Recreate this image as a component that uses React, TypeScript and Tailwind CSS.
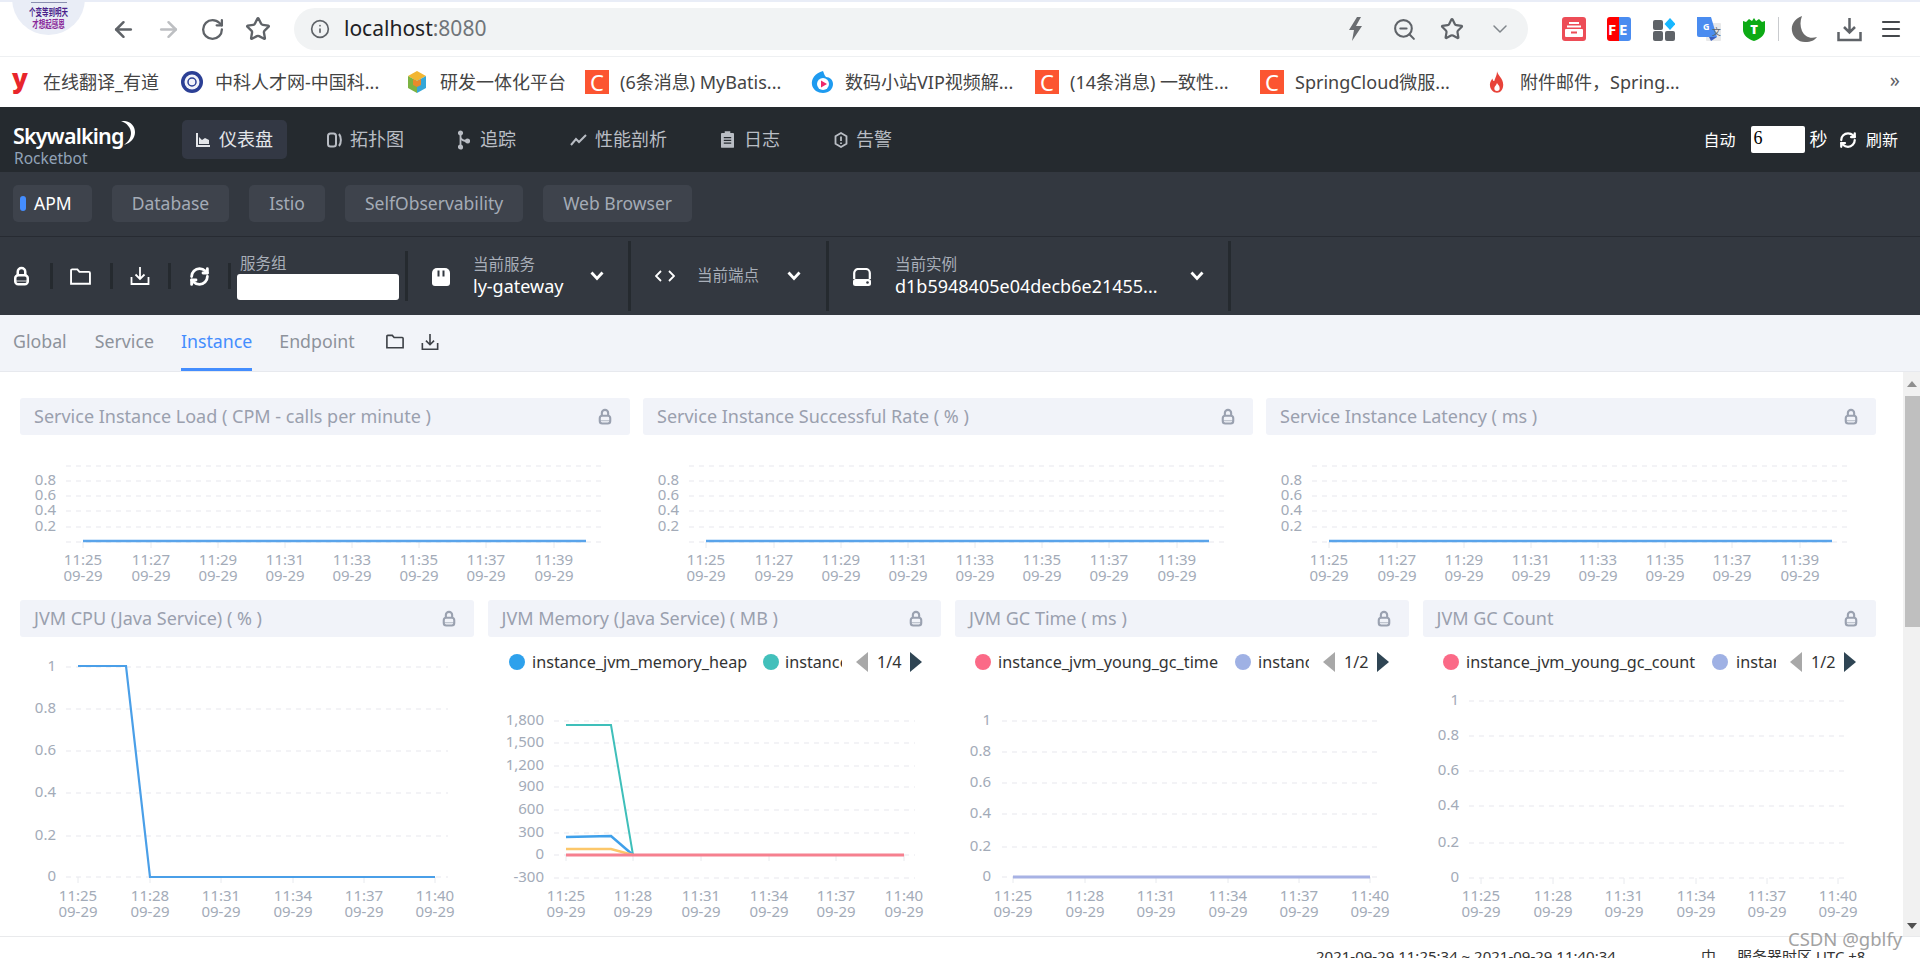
import React from "react";
import { ArrowLeft, ArrowRight, RotateCw, Star, Info, ZoomOut, ChevronDown, RefreshCw, Menu } from "lucide-react";

const FONT = '"Noto Sans","Noto Sans CJK SC",sans-serif';

const LockIcon = ({ className = "" }: { className?: string }) => (
  <svg viewBox="0 0 20 24" className={className} fill="none" stroke="currentColor" strokeWidth="3">
    <path d="M5.5 11V7a4.5 4.5 0 0 1 9 0v4" />
    <rect x="2.5" y="11" width="15" height="11" rx="3.5" />
    <path d="M3 18h14" strokeWidth="1" />
  </svg>
);
const FolderIcon = ({ className = "" }: { className?: string }) => (
  <svg viewBox="0 0 20 16" className={className} fill="none" stroke="currentColor" strokeWidth="1.8">
    <path d="M1 14.9V2.2c0-.6.4-1 1-1h5l2 2.4h9c.6 0 1 .4 1 1v10.3z" />
  </svg>
);
const SaveIcon = ({ className = "" }: { className?: string }) => (
  <svg viewBox="0 0 20 20" className={className} fill="none" stroke="currentColor" strokeWidth="1.8">
    <path d="M10 1v12M5.5 8.5 10 13l4.5-4.5" />
    <path d="M1.5 11v7h17v-7" />
  </svg>
);
const ServiceIcon = () => (
  <svg viewBox="0 0 18 18" className="w-[18px] h-[18px] mt-[2px] shrink-0">
    <path d="M0 5a5 5 0 0 1 5-5h8a5 5 0 0 1 5 5v10a3 3 0 0 1-3 3H3a3 3 0 0 1-3-3z" fill="white" />
    <rect x="5.5" y="2.5" width="2" height="6" fill="#333840" />
    <rect x="10.5" y="2.5" width="2" height="6" fill="#333840" />
  </svg>
);
const InstanceIcon = () => (
  <svg viewBox="0 0 18 18" className="w-[18px] h-[18px] mt-[2px] shrink-0" fill="none">
    <path d="M1.2 11V5A4 4 0 0 1 5.2 1h7.6a4 4 0 0 1 4 4v6" stroke="white" strokeWidth="2.2" />
    <rect x="0" y="11" width="18" height="7" rx="2.5" fill="white" />
    <circle cx="14.5" cy="14.5" r="1.3" fill="#333840" />
  </svg>
);
const Chev = () => (
  <svg viewBox="0 0 14 10" className="w-[14px] h-[10px] shrink-0" fill="none" stroke="white" strokeWidth="2.8">
    <path d="M1.5 1.5 7 7.5l5.5-6" />
  </svg>
);

function NavItem({ icon, label, active, gap = 9 }: { icon: React.ReactNode; label: string; active?: boolean; gap?: number }) {
  return (
    <div className={`flex items-center h-[39px] px-[14px] rounded-[5px] text-[18px] ${active ? "bg-[#333844] text-[#e4e6ea]" : "text-[#b9bdc4]"}`}>
      <span className="flex items-center" style={{ marginRight: gap }}>{icon}</span>
      <span>{label}</span>
    </div>
  );
}

const Tab = ({ label, active }: { label: string; active?: boolean }) => (
  <div className={`h-[37px] rounded-[5px] bg-[#3e434c] flex items-center text-[17.5px] ${active ? "pl-[7px] pr-[20px] text-white" : "px-[20px] text-[#a4abb6]"}`}>
    {active && <span className="w-[6px] h-[15px] rounded-full bg-[#448dfe] mr-[8px]" />}
    {label}
  </div>
);

const PanelTitle = ({ title }: { title: string }) => (
  <div className="h-[37px] rounded-[3px] bg-[#f1f3f9] flex items-center justify-between pl-[14px] pr-[18px] text-[18px] text-[#9aa0ae]">
    <span className="whitespace-nowrap">{title}</span>
    <LockIcon className="w-[14px] h-[17px] text-[#9aa1b0]" />
  </div>
);

type Series = { color: string; width?: number; points: [number, number][] };
type Legend = { dot1: number; t1: number; name: string; dot2: number; color1: string; color2: string; t2: number; clip: number; left: number; page: string };

function Chart({ x0, y0, w, h, yTicks, yLabelX, gridX, xTicks, xLabels, baseY, labelY, series, legend, clipId }: {
  x0: number; y0: number; w: number; h: number; yTicks: [string, number][]; yLabelX: number; gridX: [number, number];
  xTicks: number[]; xLabels: string[]; baseY: number; labelY: number; series: Series[]; legend?: Legend; clipId?: string;
}) {
  return (
    <svg viewBox={`${x0} ${y0} ${w} ${h}`} width={w} height={h} className="block" style={{ fontFamily: FONT }}>
      {yTicks.map(([t, y]) => (
        <g key={y}>
          <line x1={gridX[0]} x2={gridX[1]} y1={y} y2={y} stroke="#eff0f3" strokeWidth="1.5" strokeDasharray="5 5" />
          {t && <text x={yLabelX} y={y + 3.5} textAnchor="end" fontSize="15" fill="#a3abb8">{t}</text>}
        </g>
      ))}
      {xTicks.map((x, i) => (
        <g key={x}>
          <line x1={x} x2={x} y1={baseY} y2={baseY + 6} stroke="#e8eaee" />
          <text x={x} y={labelY} textAnchor="middle" fontSize="15" fill="#a3abb8">{xLabels[i]}</text>
          <text x={x} y={labelY + 16} textAnchor="middle" fontSize="15" fill="#a3abb8">09-29</text>
        </g>
      ))}
      {series.map((s, i) => (
        <polyline key={i} points={s.points.map((p) => p.join(",")).join(" ")} fill="none" stroke={s.color} strokeWidth={s.width ?? 2} />
      ))}
      {legend && (
        <g fontSize="16.2" fill="#333">
          <clipPath id={clipId}><rect x={legend.t2} y={645} width={legend.clip} height={36} /></clipPath>
          <circle cx={legend.dot1} cy={663} r={8} fill={legend.color1} />
          <text x={legend.t1} y={668.5}>{legend.name}</text>
          <circle cx={legend.dot2} cy={663} r={8} fill={legend.color2} />
          <text x={legend.t2} y={668.5} clipPath={`url(#${clipId})`}>instance_jvm</text>
          <path d={`M${legend.left + 12} 653v20l-12-10z`} fill="#a8a8a8" />
          <text x={legend.left + 21} y={668.5}>{legend.page}</text>
          <path d={`M${legend.left + 54} 653v20l12-10z`} fill="#2f4554" />
        </g>
      )}
    </svg>
  );
}

const TOP_LABELS = ["11:25", "11:27", "11:29", "11:31", "11:33", "11:35", "11:37", "11:39"];
const BOT_LABELS = ["11:25", "11:28", "11:31", "11:34", "11:37", "11:40"];

const TopChart = () => (
  <Chart
    x0={20} y0={435} w={610} h={155}
    yTicks={[["", 466], ["0.8", 481], ["0.6", 496], ["0.4", 511], ["0.2", 527], ["", 542]]}
    yLabelX={56} gridX={[66, 602]}
    xTicks={[83, 151, 218, 285, 352, 419, 486, 554]} xLabels={TOP_LABELS}
    baseY={542} labelY={565}
    series={[{ color: "#5aa4ea", width: 2.5, points: [[83, 541], [586, 541]] }]}
  />
);

const Favicon = ({ children }: { children: React.ReactNode }) => <span className="w-[24px] h-[24px] flex items-center justify-center shrink-0">{children}</span>;
const CsdnC = () => (
  <span className="w-[24px] h-[24px] bg-[#fc5531] text-white text-[22px] leading-[24px] text-center block">C</span>
);

const bookmarks: { icon: React.ReactNode; text: string; w: number }[] = [
  { icon: <span className="text-[#e8252b] text-[26px] font-black leading-none -mt-[8px]">y</span>, text: "在线翻译_有道", w: 172 },
  { icon: (
    <svg viewBox="0 0 24 24" className="w-[24px] h-[24px]"><circle cx="12" cy="12" r="11" fill="#2b3f95" /><circle cx="12" cy="12" r="7.5" fill="#f3f4fa" /><circle cx="12" cy="12" r="4" fill="none" stroke="#2b3f95" strokeWidth="1.5" /></svg>
  ), text: "中科人才网-中国科...", w: 225 },
  { icon: (
    <svg viewBox="0 0 24 24" className="w-[24px] h-[24px]"><path d="M12 1 21 6 12 11 3 6z" fill="#f2b632" /><path d="M3 6l9 5v12L3 18z" fill="#7cb342" /><path d="M21 6l-9 5v12l9-5z" fill="#35a7d8" /><path d="M8 9l4 2 4-2v6l-4 2-4-2z" fill="#e98a2b" /></svg>
  ), text: "研发一体化平台", w: 180 },
  { icon: <CsdnC />, text: "(6条消息) MyBatis...", w: 225 },
  { icon: (
    <svg viewBox="0 0 24 24" className="w-[24px] h-[24px]"><path d="M13 1C5 3 1 9 2 15c1 5 6 8 11 8 6 0 10-4 10-9 0-4-3-7-7-7-2-2-2-4-3-6z" fill="#1e9bf0" /><circle cx="13" cy="14" r="6" fill="white" /><path d="M11 10.5v7l6-3.5z" fill="#ee2a6b" /></svg>
  ), text: "数码小站VIP视频解...", w: 225 },
  { icon: <CsdnC />, text: "(14条消息) 一致性...", w: 225 },
  { icon: <CsdnC />, text: "SpringCloud微服...", w: 225 },
  { icon: (
    <svg viewBox="0 0 18 26" className="w-[16px] h-[24px]"><path d="M9 1c1 5 7 8 7 15 0 5-3 9-7 9s-8-4-8-9c0-3 2-6 3-7 0 2 1 3 2 3 1-4 3-6 3-11z" fill="#e8433a" /><path d="M9 14c1 2 3 3 3 6 0 2-1 3-3 3s-3-1-3-3c0-2 2-3 3-6z" fill="#fff" /></svg>
  ), text: "附件邮件，Spring...", w: 190 },
];

export default function App() {
  return (
    <div className="relative w-[1920px] h-[958px] overflow-hidden bg-white flex flex-col" style={{ fontFamily: FONT }}>
      {/* avatar overlapping the browser's top edge */}
      <div className="absolute left-[12px] -top-[38px] w-[73px] h-[73px] rounded-full bg-[#e9edf6] overflow-hidden flex flex-col items-center justify-end pb-[6px] text-[#4a1f8a] font-bold z-10">
        <span className="text-[#2a1670] text-[13px] leading-[14px] font-black mb-[10px]">失败</span>
        <span className="w-[36px] border-t border-[#8a8fb0] mb-[3px]" />
        <span className="text-[6.5px] leading-[11px] scale-y-[1.6]">个变等到明天</span>
        <span className="text-[6.5px] leading-[11px] scale-y-[1.6] mt-[1px] text-[#8a2a9a]">才想起感恩</span>
      </div>

      {/* browser toolbar */}
      <div className="h-[57px] shrink-0 border-t-2 border-[#e9edf7] border-b border-b-[#eef0f2] flex items-center pl-[111px]">
        <ArrowLeft className="w-[25px] h-[25px] text-[#5f6368] mr-[20px] shrink-0" strokeWidth={2.4} />
        <ArrowRight className="w-[25px] h-[25px] text-[#bdbfc2] mr-[19px] shrink-0" strokeWidth={2.4} />
        <RotateCw className="w-[25px] h-[25px] text-[#5f6368] mr-[20px] shrink-0" strokeWidth={2.2} />
        <Star className="w-[26px] h-[26px] text-[#5f6368] shrink-0" strokeWidth={2.2} />
        <div className="ml-[23px] w-[1234px] shrink-0 h-[42px] rounded-full bg-[#f1f3f4] flex items-center pl-[16px] pr-[16px]">
          <Info className="w-[20px] h-[20px] text-[#5f6368] mr-[14px]" strokeWidth={2} />
          <span className="text-[21px] text-[#202124]">localhost<span className="text-[#70757a]">:8080</span></span>
          <div className="ml-auto flex items-center">
            <svg viewBox="0 0 14 24" className="w-[14px] h-[24px] mr-[28.5px]"><path d="M8 0 0 13h5l-2 11 10-15H7l5-9z" fill="#6a6d71" /></svg>
            <ZoomOut className="w-[25px] h-[25px] text-[#5f6368] mr-[23px]" strokeWidth={2} />
            <Star className="w-[24px] h-[24px] text-[#5f6368] mr-[24.5px]" strokeWidth={2.2} />
            <ChevronDown className="w-[24px] h-[24px] text-[#80868b]" strokeWidth={1.5} />
          </div>
        </div>
        <div className="ml-[34px] flex items-center shrink-0">
          <svg viewBox="0 0 24 24" className="w-[24px] h-[24px] mr-[21px]"><rect width="24" height="24" rx="3" fill="#ed4d57" /><rect x="7" y="5" width="10" height="2" fill="#fff" /><rect x="5" y="8.5" width="14" height="2" fill="#fff" /><rect x="3" y="12" width="18" height="8" rx="1" fill="#fff" /><rect x="9" y="14.5" width="6" height="2" fill="#ed4d57" /></svg>
          <div className="relative w-[24px] h-[24px] rounded-[3px] overflow-hidden mr-[22px] flex text-white text-[15px] font-bold leading-[24px]">
            <span className="w-[12px] bg-[#f00] pl-[1px]">F</span>
            <span className="w-[12px] bg-[#4a8cf0]">E</span>
          </div>
          <svg viewBox="0 0 22 24" className="w-[22px] h-[24px] mr-[22px]"><rect x="0" y="3" width="10" height="10" rx="2" fill="#5f6368" /><rect x="0" y="14" width="10" height="10" rx="2" fill="#5f6368" /><rect x="12" y="14" width="10" height="10" rx="2" fill="#5f6368" /><path d="M17 1l5.5 6-5.5 6-5.5-6z" fill="#17b7ff" /></svg>
          <svg viewBox="0 0 24 24" className="w-[24px] h-[24px] mr-[21px]"><rect x="9" y="6" width="15" height="18" rx="1" fill="#e8e9ea" /><path d="M0 0h14l6 20H2a2 2 0 0 1-2-2z" fill="#4a8cf0" /><path d="M12 20h8l-6 4z" fill="#3a5fc0" /><text x="6" y="13" fontSize="9" fontWeight="700" fill="#fff">G</text><text x="15" y="18" fontSize="9" fill="#5f6368">文</text></svg>
          <svg viewBox="0 0 24 24" className="w-[24px] h-[24px] mr-[12px]"><path d="M1 4l3 1 3-3 3 2 2-3 2 3 3-2 3 3 3-1v9c0 5-5 9-11 11C6 22 1 18 1 13z" fill="#0daa15" /><text x="12" y="17" textAnchor="middle" fontSize="13" fontWeight="900" fill="#fff">T</text></svg>
          <span className="w-[1px] h-[24px] bg-[#c9cbce] mr-[12px]" />
          <svg viewBox="0 0 26 26" className="w-[26px] h-[26px] mr-[20px]"><path d="M11 0C3 3 0 9 1 15c1 6 6 11 13 11 6 0 10-2 12-5-7 2-12 0-15-6-2-5-2-10 0-15z" fill="#6b6b6b" /></svg>
          <svg viewBox="0 0 25 25" className="w-[25px] h-[25px] mr-[17px]" fill="none" stroke="#5f6368" strokeWidth="2.5"><path d="M12.5 1v14M7 10l5.5 5.5L18 10" /><path d="M1.5 15v8h22v-8" /></svg>
          <Menu className="w-[24px] h-[24px] text-[#45484c]" strokeWidth={2.2} />
        </div>
      </div>

      {/* bookmarks */}
      <div className="h-[50px] shrink-0 flex items-center pl-[8px] text-[18px] text-[#444]">
        {bookmarks.map((b) => (
          <div key={b.text} className="flex items-center shrink-0 gap-[11px]" style={{ width: b.w }}>
            <Favicon>{b.icon}</Favicon>
            <span className="whitespace-nowrap">{b.text}</span>
          </div>
        ))}
        <span className="ml-auto mr-[20px] text-[#5f6368] text-[20px] leading-none -mt-[4px]">»</span>
      </div>

      {/* app nav */}
      <div className="h-[65px] shrink-0 bg-[#252a2f] flex items-center">
        <div className="relative w-[182px] h-full pl-[13px] text-white">
          <div className="pt-[14px] text-[21.5px] font-semibold leading-[29px] tracking-[-0.8px]">Skywalking</div>
          <div className="text-[15.5px] leading-[17px] text-[#92a3b8] pl-[1px]">Rocketbot</div>
          <svg viewBox="0 0 16 24" className="absolute left-[119px] top-[14px] w-[16px] h-[24px]"><path d="M2 0c8-1 14 4 14 11 0 6-4 11-11 13 4-3 7-7 7-12C12 7 8 2 2 0z" fill="#fff" /></svg>
        </div>
        <div className="flex items-center gap-[26px]">
          <NavItem active label="仪表盘" icon={
            <svg viewBox="0 0 14 14" className="w-[14px] h-[14px]" fill="#e4e6ea"><path d="M0 0h2v12h12v2H0z" /><path d="M3 11V4l3 3 3-2 4 2v4z" /></svg>
          } />
          <NavItem label="拓扑图" gap={8} icon={
            <svg viewBox="0 0 15 16" className="w-[15px] h-[16px]" fill="none" stroke="#b9bdc4" strokeWidth="2"><rect x="1" y="1.5" width="8" height="13" rx="2.5" /><path d="M12 2c2.5 3 2.5 9 0 12" /></svg>
          } />
          <NavItem label="追踪" gap={10} icon={
            <svg viewBox="0 0 12 20" className="w-[12px] h-[20px]" fill="none" stroke="#b9bdc4" strokeWidth="1.8"><path d="M2.5 3v14M2.5 7c0 3 4 4 6 4" /><circle cx="2.5" cy="3" r="1.7" fill="#b9bdc4" /><circle cx="2.5" cy="17" r="1.7" fill="#b9bdc4" /><circle cx="9.5" cy="11" r="1.7" fill="#b9bdc4" /></svg>
          } />
          <NavItem label="性能剖析" gap={7} icon={
            <svg viewBox="0 0 18 12" className="w-[18px] h-[12px]" fill="none" stroke="#b9bdc4" strokeWidth="2"><path d="M1 11l5-6 3 3 7-7" /></svg>
          } />
          <NavItem label="日志" gap={10} icon={
            <svg viewBox="0 0 14 18" className="w-[13px] h-[17px]"><path d="M1 2h3V0h6v2h3a1 1 0 0 1 1 1v14a1 1 0 0 1-1 1H1a1 1 0 0 1-1-1V3a1 1 0 0 1 1-1z" fill="#b9bdc4" /><path d="M3 7h8M3 10h8M3 13h8" stroke="#252a2f" strokeWidth="1.3" /></svg>
          } />
          <NavItem label="告警" gap={8} icon={
            <svg viewBox="0 0 14 16" className="w-[14px] h-[16px]" fill="none" stroke="#b9bdc4" strokeWidth="1.8"><path d="M7 1l5.5 3.2v7.6L7 15l-5.5-3.2V4.2z" /><path d="M7 4.5v4.5M7 10.5v1.5" /></svg>
          } />
        </div>
        <div className="ml-auto flex items-center pr-[22px] text-white">
          <span className="text-[16px] mr-[16px]">自动</span>
          <span className="w-[54px] h-[27px] bg-white rounded-[2px] text-black text-[18px] leading-[25px] pl-[2px] mr-[4px]" style={{ fontFamily: '"Liberation Serif",serif' }}>6</span>
          <span className="text-[18px] mr-[11.5px]">秒</span>
          <RefreshCw className="w-[18px] h-[18px] mr-[9px]" strokeWidth={3} />
          <span className="text-[16px]">刷新</span>
        </div>
      </div>

      {/* layer tabs */}
      <div className="h-[64px] shrink-0 bg-[#333840] flex items-start gap-[20px] pt-[13px] pl-[13px]">
        <Tab active label="APM" />
        <Tab label="Database" />
        <Tab label="Istio" />
        <Tab label="SelfObservability" />
        <Tab label="Web Browser" />
      </div>

      {/* selector bar */}
      <div className="h-[79px] shrink-0 bg-[#333840] border-t border-[#272b32] flex items-center text-white">
        <div className="w-[50px] flex justify-center pr-[7px]"><LockIcon className="w-[17px] h-[20px] text-white" /></div>
        <span className="w-[3px] h-[26px] bg-[#252a2f]" />
        <div className="w-[57px] flex justify-center pr-[2px]"><FolderIcon className="w-[21px] h-[17px]" /></div>
        <span className="w-[3px] h-[26px] bg-[#252a2f]" />
        <div className="w-[55px] flex justify-center pr-[2px]"><SaveIcon className="w-[20px] h-[20px]" /></div>
        <span className="w-[3px] h-[26px] bg-[#252a2f]" />
        <div className="w-[57px] flex justify-center"><RefreshCw className="w-[21px] h-[21px]" strokeWidth={3.2} /></div>
        <span className="w-[3px] h-[26px] bg-[#252a2f]" />
        <div className="w-[174px] pl-[6px] flex flex-col">
          <span className="text-[15.5px] leading-[21px] text-[#a8aeb8] pl-[3px]">服务组</span>
          <span className="w-[162px] h-[26px] bg-white rounded-[3px]" />
        </div>
        <span className="w-[3px] h-[50px] bg-[#252a2f]" />
        <div className="w-[220px] flex items-center pl-[24px]">
          <ServiceIcon />
          <div className="w-[117px] ml-[23px] flex flex-col">
            <span className="text-[15.5px] leading-[20px] text-[#a8aeb8]">当前服务</span>
            <span className="text-[18px] leading-[24px] whitespace-nowrap">ly-gateway</span>
          </div>
          <Chev />
        </div>
        <span className="w-[3px] h-[70px] bg-[#252a2f]" />
        <div className="w-[195px] flex items-center pl-[24px]">
          <svg viewBox="0 0 20 12" className="w-[20px] h-[12px]" fill="none" stroke="white" strokeWidth="1.8"><path d="M6 1 1 6l5 5M14 1l5 5-5 5" /></svg>
          <span className="w-[90px] ml-[22px] text-[15.5px] text-[#a8aeb8]">当前端点</span>
          <Chev />
        </div>
        <span className="w-[3px] h-[70px] bg-[#252a2f]" />
        <div className="w-[399px] flex items-center pl-[24px]">
          <InstanceIcon />
          <div className="w-[295px] ml-[24px] flex flex-col">
            <span className="text-[15.5px] leading-[20px] text-[#a8aeb8]">当前实例</span>
            <span className="text-[18px] leading-[24px] whitespace-nowrap">d1b5948405e04decb6e21455...</span>
          </div>
          <Chev />
        </div>
        <span className="w-[3px] h-[70px] bg-[#252a2f]" />
      </div>

      {/* dashboard tabs */}
      <div className="h-[57px] shrink-0 bg-[#f2f4f9] border-b border-[#e7e9ee] flex items-start pl-[13px] text-[17.75px] text-[#8d929b]">
        <div className="h-[56px] flex items-center mr-[28px] pb-[4px]">Global</div>
        <div className="h-[56px] flex items-center mr-[27px] pb-[4px]">Service</div>
        <div className="h-[56px] flex items-center mr-[27px] pb-[1px] text-[#448dfe] border-b-[3px] border-[#448dfe]">Instance</div>
        <div className="h-[56px] flex items-center pb-[4px]">Endpoint</div>
        <div className="h-[56px] flex items-center ml-[31px] text-[#3d4147] pb-[3px]">
          <FolderIcon className="w-[18px] h-[15px] mr-[17px]" />
          <SaveIcon className="w-[18px] h-[18px]" />
        </div>
      </div>

      {/* dashboard */}
      <div className="h-[564px] shrink-0 flex">
        <div className="w-[1903px] pl-[20px] pr-[27px] pt-[26px]">
          <div className="grid grid-cols-3 gap-x-[13px] gap-y-[10px]">
            <div>
              <PanelTitle title="Service Instance Load ( CPM - calls per minute )" />
              <TopChart />
            </div>
            <div>
              <PanelTitle title="Service Instance Successful Rate ( % )" />
              <TopChart />
            </div>
            <div>
              <PanelTitle title="Service Instance Latency ( ms )" />
              <TopChart />
            </div>
          </div>
          <div className="grid grid-cols-4 gap-x-[14px] mt-[10px]">
            <div>
              <PanelTitle title="JVM CPU (Java Service) ( % )" />
              <Chart x0={20} y0={638} w={454} h={298}
                yTicks={[["1", 668], ["0.8", 710], ["0.6", 752], ["0.4", 794], ["0.2", 837], ["0", 878]]}
                yLabelX={56} gridX={[66, 448]} xTicks={[78, 150, 221, 293, 364, 435]} xLabels={BOT_LABELS}
                baseY={878} labelY={902}
                series={[{ color: "#4a9fe8", width: 2.2, points: [[78, 667], [126, 667], [150, 878], [435, 878]] }]}
              />
            </div>
            <div>
              <PanelTitle title="JVM Memory (Java Service) ( MB )" />
              <Chart x0={487} y0={638} w={454} h={298} clipId="clipMem"
                yTicks={[["1,800", 722], ["1,500", 744], ["1,200", 767], ["900", 788], ["600", 811], ["300", 834], ["0", 856], ["-300", 879]]}
                yLabelX={543} gridX={[553, 914]} xTicks={[565, 632, 700, 768, 835, 903]} xLabels={BOT_LABELS}
                baseY={856} labelY={902}
                series={[
                  { color: "#3fbfba", points: [[565, 726], [610, 726], [632, 856]] },
                  { color: "#3fa0ea", width: 2.5, points: [[565, 838], [610, 837], [632, 856]] },
                  { color: "#fcc76a", width: 2.5, points: [[565, 850], [610, 850], [632, 856]] },
                  { color: "#f6808f", width: 3, points: [[565, 856], [903, 856]] },
                ]}
                legend={{ dot1: 516, t1: 531, name: "instance_jvm_memory_heap", dot2: 770, color1: "#2ea1ec", color2: "#42c0bb", t2: 784, clip: 57, left: 855, page: "1/4" }}
              />
            </div>
            <div>
              <PanelTitle title="JVM GC Time ( ms )" />
              <Chart x0={955} y0={638} w={454} h={298} clipId="clipTime"
                yTicks={[["1", 722], ["0.8", 753], ["0.6", 784], ["0.4", 815], ["0.2", 848], ["0", 878]]}
                yLabelX={991} gridX={[1002, 1382]} xTicks={[1013, 1085, 1156, 1228, 1299, 1370]} xLabels={BOT_LABELS}
                baseY={878} labelY={902}
                series={[{ color: "#a7b2e4", width: 3, points: [[1013, 878], [1370, 878]] }]}
                legend={{ dot1: 983, t1: 998, name: "instance_jvm_young_gc_time", dot2: 1243, color1: "#fb6a87", color2: "#9fb1e4", t2: 1258, clip: 51, left: 1323, page: "1/2" }}
              />
            </div>
            <div>
              <PanelTitle title="JVM GC Count" />
              <Chart x0={1423} y0={638} w={454} h={298} clipId="clipCount"
                yTicks={[["1", 702], ["0.8", 737], ["0.6", 772], ["0.4", 807], ["0.2", 844], ["0", 879]]}
                yLabelX={1459} gridX={[1469, 1849]} xTicks={[1481, 1553, 1624, 1696, 1767, 1838]} xLabels={BOT_LABELS}
                baseY={879} labelY={902}
                series={[]}
                legend={{ dot1: 1451, t1: 1466, name: "instance_jvm_young_gc_count", dot2: 1720, color1: "#fb6a87", color2: "#9fb1e4", t2: 1736, clip: 40, left: 1790, page: "1/2" }}
              />
            </div>
          </div>
        </div>
        {/* page scrollbar */}
        <div className="w-[17px] bg-[#f1f1f1] flex flex-col items-end">
          <div className="w-full h-[24px] flex items-center justify-center">
            <span className="w-0 h-0 border-x-[5px] border-x-transparent border-b-[6px] border-b-[#8f8f8f]" />
          </div>
          <div className="w-[15px] h-[231px] bg-[#bfbfbf]" />
          <div className="mt-auto w-full h-[20px] flex items-center justify-center">
            <span className="w-0 h-0 border-x-[5px] border-x-transparent border-t-[6px] border-t-[#505050]" />
          </div>
        </div>
      </div>

      {/* footer (clipped by the window) */}
      <div className="flex-1 border-t border-[#e9eaec] bg-white relative pt-[9px] pl-[1316px] text-[15px] leading-[20px] text-[#333] whitespace-nowrap">
        <span className="inline-block w-[385px]">2021-09-29 11:25:34 ~ 2021-09-29 11:40:34</span>
        <span className="inline-block w-[36px]">中</span>
        <span>服务器时区 UTC +8</span>
      </div>
      <div className="absolute left-[1788px] top-[925px] text-[18.5px] text-[#8c8c8c] opacity-80 whitespace-nowrap">CSDN @gblfy</div>
    </div>
  );
}
